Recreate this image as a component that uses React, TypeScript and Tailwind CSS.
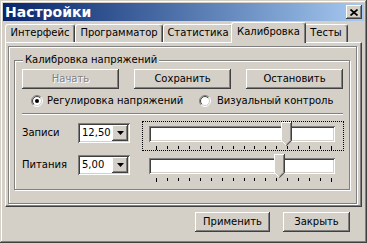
import { useId } from "react";

const raised =
  "bg-[#d4d0c8] shadow-[inset_-1px_-1px_#404040,inset_1px_1px_#ffffff,inset_-2px_-2px_#808080,inset_2px_2px_#d4d0c8]";
const sunken =
  "shadow-[inset_1px_1px_#808080,inset_-1px_-1px_#ffffff,inset_2px_2px_#404040,inset_-2px_-2px_#d4d0c8]";
const etched = "border border-[#808080] shadow-[inset_1px_1px_#ffffff,1px_1px_#ffffff]";

function Button({ label, w, disabled }: { label: string; w: string; disabled?: boolean }) {
  return (
    <div className={`${raised} ${w} h-[20px] flex items-center justify-center`}>
      <span className={disabled ? "text-[#808080] [text-shadow:1px_1px_#ffffff]" : ""}>{label}</span>
    </div>
  );
}

function Radio({ checked }: { checked?: boolean }) {
  const id = useId().replace(/:/g, "");
  return (
    <svg width="12" height="12" viewBox="0 0 12 12" className="shrink-0">
      <defs>
        <linearGradient id={`o${id}`} x1="0" y1="0" x2="1" y2="1">
          <stop offset="0.5" stopColor="#808080" />
          <stop offset="0.5" stopColor="#ffffff" />
        </linearGradient>
        <linearGradient id={`i${id}`} x1="0" y1="0" x2="1" y2="1">
          <stop offset="0.5" stopColor="#404040" />
          <stop offset="0.5" stopColor="#d4d0c8" />
        </linearGradient>
      </defs>
      <circle cx="6" cy="6" r="5.5" fill="none" stroke={`url(#o${id})`} />
      <circle cx="6" cy="6" r="4.5" fill="#ffffff" stroke={`url(#i${id})`} />
      {checked && <circle cx="6" cy="6" r="2" fill="#000000" />}
    </svg>
  );
}

function Tab({ label, w, active }: { label: string; w: string; active?: boolean }) {
  return (
    <div
      className={
        active
          ? `${w} h-[21px] -mx-[2px] -mb-px relative z-10 bg-[#d4d0c8] border-l border-t border-white border-r border-r-[#404040] rounded-t-[3px] shadow-[inset_-1px_0_#808080] flex justify-center pt-[3px]`
          : `${w} h-[18px] bg-[#d4d0c8] border-l border-t border-white border-r border-r-[#404040] rounded-t-[3px] shadow-[inset_-1px_0_#808080] flex justify-center pt-[2px]`
      }
    >
      {label}
    </div>
  );
}

function Combo({ value }: { value: string }) {
  return (
    <div className={`${sunken} bg-white w-[52px] h-[20px] mt-[2px] flex items-center p-[2px]`}>
      <span className="flex-1 pl-[2px]">{value}</span>
      <div className={`${raised} w-[16px] h-[16px] flex items-center justify-center`}>
        <svg width="7" height="4" viewBox="0 0 7 4">
          <polygon points="0,0 7,0 3.5,4" fill="#000000" />
        </svg>
      </div>
    </div>
  );
}

function Thumb() {
  return (
    <svg width="11" height="24" viewBox="0 0 11 24">
      <polygon points="0,0 11,0 11,18.5 5.5,24 0,18.5" fill="#d4d0c8" />
      <polyline points="0.5,18.5 0.5,0.5 10,0.5" fill="none" stroke="#ffffff" />
      <polyline points="0.5,18.5 5,23" fill="none" stroke="#ffffff" />
      <polyline points="10.5,0 10.5,18.7 5.5,23.7" fill="none" stroke="#404040" />
      <polyline points="9.5,1 9.5,18.3 5.3,22.5" fill="none" stroke="#808080" />
    </svg>
  );
}

function Slider({ thumb, focused }: { thumb: number; focused?: boolean }) {
  const ticks = Array.from({ length: 17 }, (_, i) => i);
  return (
    <div
      className={`ml-[12px] w-[202px] h-[30px] border border-dotted ${
        focused ? "border-black" : "border-transparent"
      } pl-[6px] pt-[4px]`}
    >
      <div className={`${sunken} bg-white w-[186px] h-[16px] relative`}>
        <div className="absolute top-[-4px]" style={{ left: thumb }}>
          <Thumb />
        </div>
      </div>
      <div className="ml-[7px] mt-[4px] w-[176px] flex justify-between items-start">
        {ticks.map((i) => (
          <div
            key={i}
            className={`w-px bg-black ${i === 0 || i === 16 ? "h-[4px]" : "h-[3px]"}`}
          />
        ))}
      </div>
    </div>
  );
}

function Row({ label, value, thumb, focused }: { label: string; value: string; thumb: number; focused?: boolean }) {
  return (
    <div className="flex items-start">
      <div className="w-[56px] h-[20px] mt-[2px] flex items-center">{label}</div>
      <Combo value={value} />
      <Slider thumb={thumb} focused={focused} />
    </div>
  );
}

export default function App() {
  return (
    <div className="w-[367px] h-[243px] bg-[#d4d0c8] p-[3px] flex flex-col font-['DejaVu_Sans',sans-serif] text-[10px] leading-[12px] text-black shadow-[inset_-1px_-1px_#404040,inset_1px_1px_#d4d0c8,inset_-2px_-2px_#808080,inset_2px_2px_#ffffff]">
      {/* title bar */}
      <div className="h-[18px] bg-linear-to-r from-[#0a246a] to-[#a6caf0] flex items-center pl-[2px] pr-[2px]">
        <span className="text-white font-bold text-[14px] leading-[16px]">Настройки</span>
        <div className={`${raised} ml-auto w-[16px] h-[14px] flex items-center justify-center`}>
          <svg width="8" height="7" viewBox="0 0 8 7">
            <path d="M0.5 0.5 L7.5 6.5 M7.5 0.5 L0.5 6.5" stroke="#000000" strokeWidth="1.7" />
          </svg>
        </div>
      </div>

      {/* tabs */}
      <div className="mt-[1px] px-[2px] h-[20px] flex items-end">
        <Tab label="Интерфейс" w="w-[70px]" />
        <Tab label="Программатор" w="w-[88px]" />
        <Tab label="Статистика" w="w-[70px]" />
        <Tab label="Калибровка" w="w-[75px]" active />
        <Tab label="Тесты" w="w-[44px]" />
      </div>

      {/* tab page */}
      <div className="mx-[2px] h-[165px] border-l border-t border-white border-r border-b border-r-[#404040] border-b-[#404040] shadow-[inset_-1px_-1px_#808080]">
        <div className={`${etched} ml-[2px] mt-[3px] w-[349px] h-[158px] pt-[13px] pl-[5px]`}>
          <div className={`${etched} relative w-[336px] h-[130px] pl-[7px] pt-[8px]`}>
            <span className="absolute left-[8px] top-[-7px] bg-[#d4d0c8] px-[2px]">
              Калибровка напряжений
            </span>
            <div className="flex gap-[15px]">
              <Button label="Начать" w="w-[97px]" disabled />
              <Button label="Сохранить" w="w-[97px]" />
              <Button label="Остановить" w="w-[97px]" />
            </div>
            <div className="mt-[6px] h-[12px] flex items-center pl-[9px]">
              <div className="w-[168px] flex items-center gap-[4px]">
                <Radio checked />
                <span>Регулировка напряжений</span>
              </div>
              <div className="flex items-center gap-[6px]">
                <Radio />
                <span>Визуальный контроль</span>
              </div>
            </div>
            <div className="mt-[6px] w-[321px] h-[2px] border-t border-[#808080] border-b border-b-white" />
            <div className="mt-[6px] flex flex-col gap-[2px]">
              <Row label="Записи" value="12,50" thumb={132} focused />
              <Row label="Питания" value="5,00" thumb={125} />
            </div>
          </div>
        </div>
      </div>

      {/* bottom buttons */}
      <div className="mt-[5px] flex justify-end gap-[13px] pr-[14px]">
        <Button label="Применить" w="w-[75px]" />
        <Button label="Закрыть" w="w-[67px]" />
      </div>
    </div>
  );
}
